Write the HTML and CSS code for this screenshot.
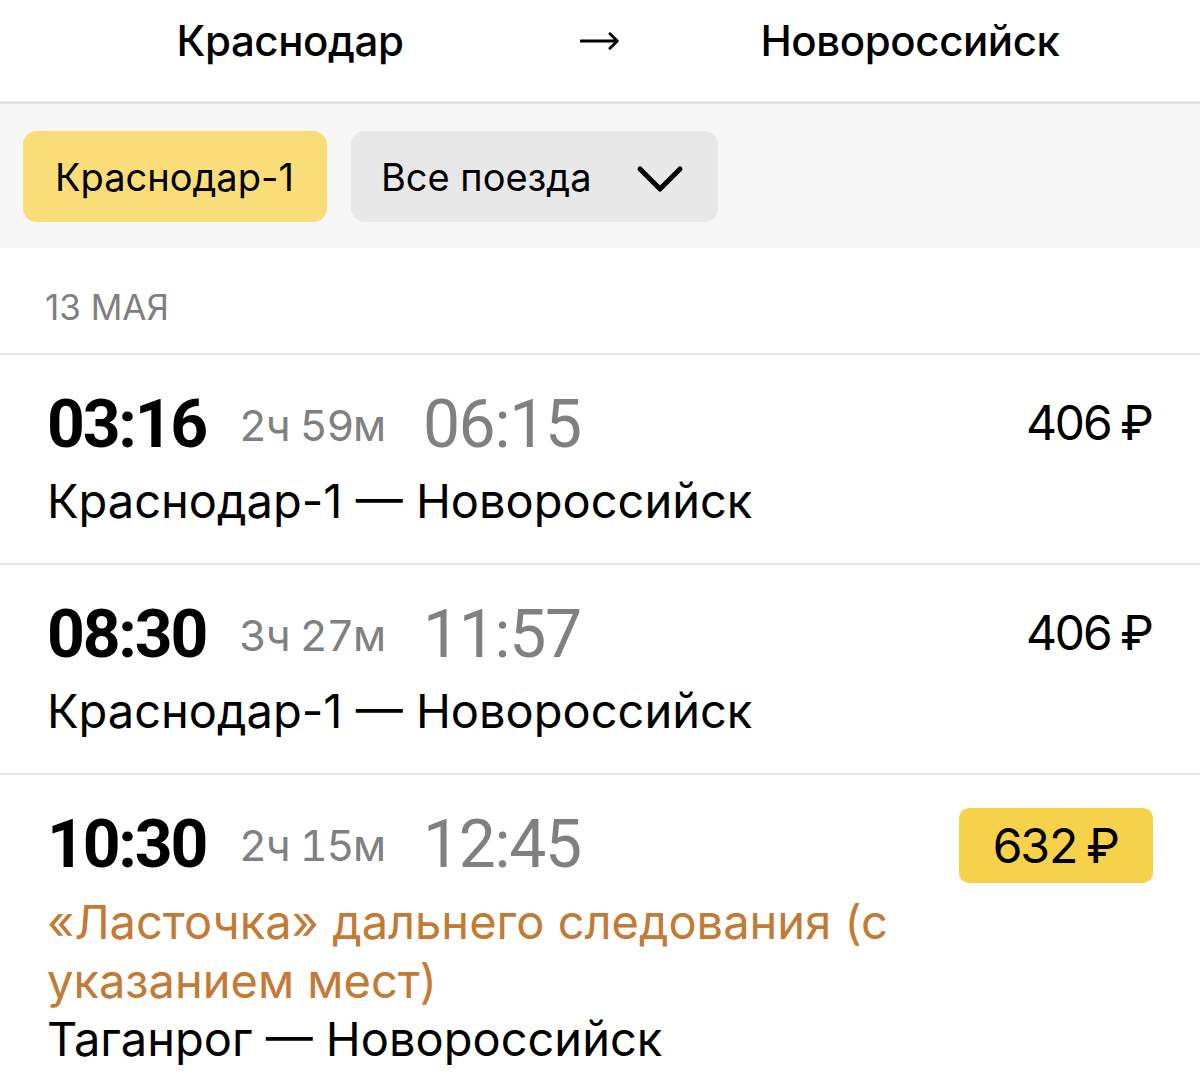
FILE: index.html
```html
<!DOCTYPE html>
<html lang="ru">
<head>
<meta charset="utf-8">
<link rel="stylesheet" href="styles.css">
</head>
<body>
<header class="route-head">
  <div class="city">Краснодар</div>
  <div class="arrow"><svg viewBox="0 0 44 20" width="44" height="20"><path d="M1 10 H41 M33 2 L41 10 L33 18" fill="none" stroke="#000" stroke-width="3.2" stroke-linecap="round" stroke-linejoin="round"/></svg></div>
  <div class="city">Новороссийск</div>
</header>
<div class="filters">
  <div class="chip chip-active">Краснодар-1</div>
  <div class="chip chip-select">Все поезда
    <svg class="chev" viewBox="0 0 48 30" width="48" height="30"><path d="M4 5 L24 25 L44 5" fill="none" stroke="#000" stroke-width="5" stroke-linecap="round" stroke-linejoin="round"/></svg>
  </div>
</div>
<div class="date">13 МАЯ</div>
<div class="trip">
  <div class="trip-top">
    <div class="times"><span class="dep">03:16</span><span class="dur">2ч 59м</span><span class="arr">06:15</span></div>
    <div class="price">406 ₽</div>
  </div>
  <div class="route">Краснодар-1 — Новороссийск</div>
</div>
<div class="trip">
  <div class="trip-top">
    <div class="times"><span class="dep">08:30</span><span class="dur">3ч 27м</span><span class="arr">11:57</span></div>
    <div class="price">406 ₽</div>
  </div>
  <div class="route">Краснодар-1 — Новороссийск</div>
</div>
<div class="trip trip-last">
  <div class="trip-top">
    <div class="times"><span class="dep">10:30</span><span class="dur">2ч 15м</span><span class="arr">12:45</span></div>
    <div class="price price-hot">632 ₽</div>
  </div>
  <div class="train-name">«Ласточка» дальнего следования (с указанием мест)</div>
  <div class="route route-tight">Таганрог — Новороссийск</div>
</div>
</body>
</html>
```
FILE: styles.css
```css
* { box-sizing: border-box; }
html, body { margin: 0; padding: 0; background: #fff; }
body {
  font-family: Inter, "Noto Sans", sans-serif;
  color: #000;
  width: 1200px;
  overflow: hidden;
}
.route-head {
  display: grid;
  grid-template-columns: 1fr 40px 1fr;
  align-items: start;
  height: 104px;
  border-bottom: 3px solid #e4e4e4;
  font-size: 42px;
  font-weight: 500;
  letter-spacing: -0.4px;
  padding-top: 15px;
}
.city { text-align: center; line-height: normal; }
.arrow {
  display: flex;
  justify-content: center;
  padding-top: 16px;
}
.filters {
  background: #f7f7f7;
  height: 144px;
  display: flex;
  gap: 24px;
  padding: 27px 23px 0;
}
.chip {
  height: 91px;
  border-radius: 14px;
  display: flex;
  align-items: center;
  font-size: 38px;
}
.chip-active { background: #f8dd78; padding: 0 33px 0 32px; }
.chip-select { background: #e8e8e8; gap: 44px; width: 367px; padding: 0 30px; }
.chev { margin-top: 4px; }
.date {
  height: 107px;
  padding: 38px 45px 0;
  font-size: 35px;
  color: #7f7f7f;
  border-bottom: 2px solid #e8e8e8;
}
.trip {
  padding: 31px 47px 0;
  height: 210px;
  border-bottom: 2px solid #e8e8e8;
}
.trip-last { border-bottom: none; height: auto; }
.trip-top {
  display: flex;
  justify-content: space-between;
  align-items: flex-start;
}
.times { display: flex; align-items: center; }
.dep {
  font-family: Roboto, Inter, sans-serif;
  font-size: 66px;
  font-weight: 700;
  letter-spacing: -2.2px;
  font-variant-numeric: tabular-nums;
}
.dur {
  font-size: 43px;
  color: #808080;
  letter-spacing: -1.2px;
  margin: 0 38px 0 33px;
  font-variant-numeric: tabular-nums;
}
.arr {
  font-family: Roboto, Inter, sans-serif;
  font-size: 66px;
  color: #808080;
  letter-spacing: -1.3px;
  font-variant-numeric: tabular-nums;
}
.price {
  font-size: 48px;
  letter-spacing: -3px;
  margin-top: 7px;
  margin-right: 2px;
  font-variant-numeric: tabular-nums;
}
.price-hot {
  background: #f6d14a;
  border-radius: 10px;
  padding: 8px 36px 8px 33px;
  margin-top: 2px;
  margin-right: 0;
}
.route { font-size: 47px; margin-top: 9px; }
.train-name {
  font-size: 47px;
  color: #c27a35;
  line-height: 58.5px;
  margin-top: 10px;
  width: 870px;
}
.route-tight { margin-top: 0; }
```
